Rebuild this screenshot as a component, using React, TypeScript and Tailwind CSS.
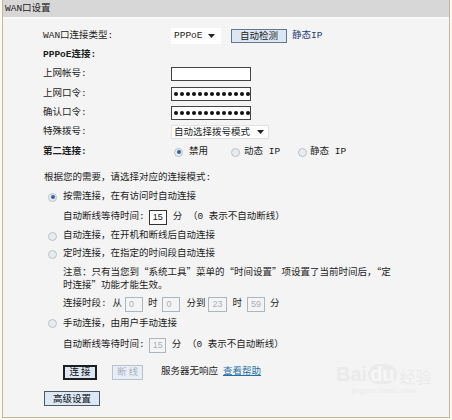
import React from 'react';

const FONT = "font-['Liberation_Mono','Noto_Sans_CJK_SC',monospace]";
const CJK = "font-['Noto_Sans_CJK_SC',sans-serif]";

function Radio({ checked = false }: { checked?: boolean }) {
  return (
    <span className="flex h-[9px] w-[9px] shrink-0 items-center justify-center rounded-full border border-[#b9c1c9] bg-[#e9ecef]">
      {checked && <span className="h-[4px] w-[4px] rounded-full bg-[#2f5fb3]" />}
    </span>
  );
}

function Arrow() {
  return (
    <svg width="7" height="4" viewBox="0 0 7 4" className="shrink-0">
      <path d="M0 0 H7 L3.5 4 Z" fill="#222" />
    </svg>
  );
}

function Dots() {
  return (
    <div className="flex items-center gap-[2px] pl-[2px]">
      {Array.from({ length: 13 }).map((_, i) => (
        <span key={i} className="h-[4px] w-[4px] rounded-full bg-[#111]" />
      ))}
    </div>
  );
}

function SmallBox({ value, disabled = false, w = 'w-[18px]' }: { value: string; disabled?: boolean; w?: string }) {
  return (
    <span
      className={`flex h-[15px] ${w} items-center border pl-[3px] font-['Liberation_Sans',sans-serif] text-[9px] ${
        disabled ? 'border-[#aab6c2] text-[#a7b0ba]' : 'border-[#333] bg-white text-[#222]'
      }`}
    >
      {value}
    </span>
  );
}

function Label({ children, bold = false }: { children: React.ReactNode; bold?: boolean }) {
  return <div className={`w-[128px] shrink-0 ${bold ? 'font-bold' : ''}`}>{children}</div>;
}

export default function App() {
  return (
    <div className={`relative h-[420px] w-[452px] overflow-hidden bg-[#fbf9f3] text-[9.5px] leading-none text-[#1d1d1d] ${FONT}`}>
      <div className="ml-[2px] flex h-[418px] w-[448px] flex-col border-b border-l border-r border-[#c8b892] bg-[#f4f4f4]">
        {/* Title */}
        <div className="flex h-[17px] items-center bg-[#d7d7d7] pl-[2px] text-[#222]">WAN口设置</div>
        <div className="h-[2px] bg-[#fafafa]" />

        {/* PPPoE section */}
        <div className="mt-[7px] flex flex-col pl-[40px]">
          <div className="flex h-[19px] items-center">
            <Label>WAN口连接类型:</Label>
            <div className="flex h-[16px] w-[50px] items-center justify-between bg-white pl-[3px] pr-[6px]">
              <span>PPPoE</span>
              <Arrow />
            </div>
            <button className="ml-[10px] flex h-[14px] w-[56px] items-center justify-center border border-[#66778c] bg-[#dce7f5] text-[#222]">
              <span className={CJK}>自动检测</span>
            </button>
            <span className="ml-[5px] text-[#1f3c78]">静态IP</span>
          </div>
          <div className="flex h-[19px] items-center">
            <Label bold>PPPoE连接:</Label>
          </div>
          <div className="flex h-[20px] items-center">
            <Label>上网帐号:</Label>
            <div className="h-[14px] w-[80px] border border-[#444] bg-white" />
          </div>
          <div className="flex h-[19px] items-center">
            <Label>上网口令:</Label>
            <div className="flex h-[14px] w-[80px] items-center border border-[#444] bg-white">
              <Dots />
            </div>
          </div>
          <div className="flex h-[19px] items-center">
            <Label>确认口令:</Label>
            <div className="flex h-[14px] w-[80px] items-center border border-[#444] bg-white">
              <Dots />
            </div>
          </div>
          <div className="flex h-[20px] items-center">
            <Label>特殊拨号:</Label>
            <div className="flex h-[14px] w-[98px] items-center justify-between border border-[#e2e2e2] bg-white pl-[2px] pr-[4px]">
              <span className={CJK}>自动选择拨号模式</span>
              <Arrow />
            </div>
          </div>
          <div className="flex h-[20px] items-center">
            <Label bold>第二连接:</Label>
            <div className="flex w-[58px] items-center gap-[6px] pl-[3px]">
              <Radio checked />
              <span>禁用</span>
            </div>
            <div className="flex w-[69px] items-center gap-[4px] pl-[2px]">
              <Radio />
              <span>动态 IP</span>
            </div>
            <div className="flex items-center gap-[3px]">
              <Radio />
              <span>静态 IP</span>
            </div>
          </div>
        </div>

        {/* Connection mode */}
        <div className="mt-[7px] flex flex-col pl-[41px]">
          <div className="flex h-[18px] items-center">根据您的需要，请选择对应的连接模式:</div>
          <div className="flex h-[20px] items-center gap-[6px] pl-[4px]">
            <Radio checked />
            <span>按需连接，在有访问时自动连接</span>
          </div>
          <div className="flex h-[20px] items-center pl-[19px]">
            <span>自动断线等待时间:</span>
            <span className="ml-[4px]">
              <SmallBox value="15" />
            </span>
            <span className="ml-[6px]">分 （0 表示不自动断线）</span>
          </div>
          <div className="flex h-[18px] items-center gap-[6px] pl-[4px]">
            <Radio />
            <span>自动连接，在开机和断线后自动连接</span>
          </div>
          <div className="flex h-[18px] items-center gap-[6px] pl-[4px]">
            <Radio />
            <span>定时连接，在指定的时间段自动连接</span>
          </div>
          <p className={`mt-[2px] pl-[19px] leading-[13px] ${CJK}`}>
            注意：只有当您到“系统工具”菜单的“时间设置”项设置了当前时间后，“定
            <br />
            时连接”功能才能生效。
          </p>
          <div className="mt-[3px] flex h-[20px] items-center pl-[19px]">
            <span>连接时段: 从</span>
            <span className="ml-[3px]"><SmallBox value="0" disabled /></span>
            <span className="ml-[5px]">时</span>
            <span className="ml-[5px]"><SmallBox value="0" disabled /></span>
            <span className="ml-[6px]">分到</span>
            <span className="ml-[3px]"><SmallBox value="23" disabled w="w-[19px]" /></span>
            <span className="ml-[5px]">时</span>
            <span className="ml-[5px]"><SmallBox value="59" disabled w="w-[18px]" /></span>
            <span className="ml-[5px]">分</span>
          </div>
          <div className="flex h-[19px] items-center gap-[6px] pl-[4px]">
            <Radio />
            <span>手动连接，由用户手动连接</span>
          </div>
          <div className="mt-[2px] flex h-[20px] items-center pl-[19px]">
            <span>自动断线等待时间:</span>
            <span className="ml-[4px]">
              <SmallBox value="15" disabled w="w-[17px]" />
            </span>
            <span className="ml-[6px]">分 （0 表示不自动断线）</span>
          </div>

          <div className="mt-[9px] flex h-[16px] items-center pl-[19px]">
            <button className="flex h-[15px] w-[34px] items-center justify-center border-2 border-[#1e1e1e] bg-[#dce7f5] text-[#111]">
              <span className={CJK}>连 接</span>
            </button>
            <button className="ml-[15px] flex h-[15px] w-[31px] items-center justify-center border border-[#b6c4d2] bg-[#e8eef6] text-[#a9b3be]">
              <span className={CJK}>断 线</span>
            </button>
            <span className="ml-[18px]">服务器无响应</span>
            <span className="ml-[5px] text-[#1f6fa8] underline">查看帮助</span>
          </div>

          <div className="mt-[11px] flex">
            <button className="flex h-[15px] w-[56px] items-center justify-center border border-[#505a66] bg-[#dce8f5] text-[#111]">
              <span className={CJK}>高级设置</span>
            </button>
          </div>
        </div>
      </div>

      {/* watermark */}
      <div className="pointer-events-none absolute left-[336px] top-[364px] flex flex-col items-center text-[#eaeaea]">
        <div className="flex items-end font-['Liberation_Sans',sans-serif] text-[20px] font-bold leading-none">
          <span>Bai</span>
          <span className="ml-[1px] rounded-full bg-[#ebebeb] px-[2px] text-[#f7f7f7]">du</span>
          <span className={`ml-[3px] text-[16px] font-normal ${CJK}`}>经验</span>
        </div>
        <span className="mt-[3px] font-['Liberation_Sans',sans-serif] text-[8px] text-[#ebebeb]">jingyan.baidu.com</span>
      </div>
    </div>
  );
}
